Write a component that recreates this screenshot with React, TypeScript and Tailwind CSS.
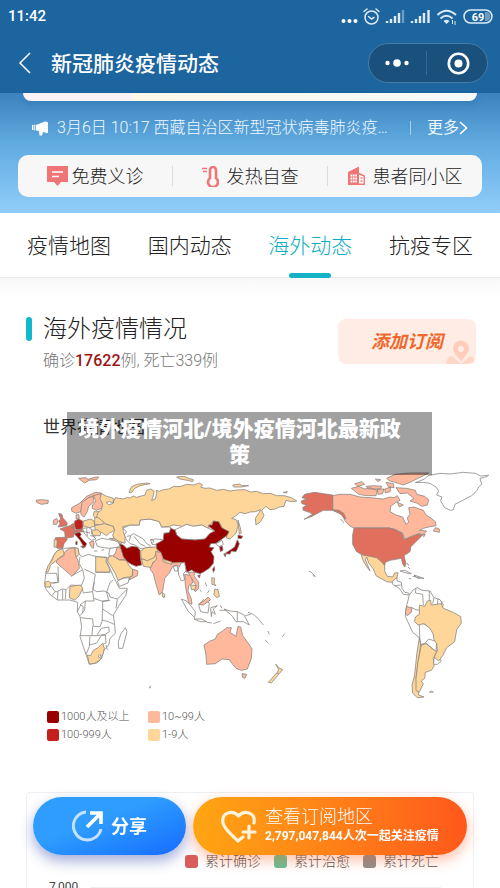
import React from "react";

const DARK = "#990000";
const RED = "#c41f1b";
const CORAL = "#e06f5d";
const PINK = "#ffb89b";
const SAND = "#fed699";
const NONE = "#ffffff";

type Shape = { fill: string; d: string };

const africaEurope: Shape[] = [
  // africa
  {
    fill: NONE,
    d: "M82 257L100 250L135 248L145 252L147 268L158 275L175 268L200 275L232 277L230 290L238 305L248 330L258 350L268 370L292 370L288 390L265 425L250 450L254 480L256 505L240 520L236 540L222 555L215 580L200 594L178 598L172 580L160 545L150 515L155 485L150 455L142 440L143 412L120 405L100 405L82 405L62 390L46 370L44 355L48 320L62 290L72 270Z",
  },
  {
    fill: "none",
    d: "M48 325H80L84 352L56 354M84 304L86 352L68 355M56 366L64 364L75 380L66 392M75 380L84 380L82 404M84 378L98 372L108 374L106 402M98 374V404M108 374L122 360M125 333L158 314L163 340L154 362L122 360M158 314L147 295L150 275M163 312L196 328L192 350L188 380L160 384M196 322L240 322M194 350L188 372L200 380L222 378L236 384M160 384L156 368M188 380L192 408L166 408L150 420M192 400L214 408L236 406L230 382L240 352L250 345M236 384L240 396L262 402L290 374M262 402L258 430M240 406L218 410V432L248 452M166 408L164 436L150 452M218 432L216 470L210 485L190 484L188 462L168 460L152 458M216 465L236 470L252 478M188 484L186 512L150 512M186 512H200L214 490L236 486L238 500L226 508L200 512M180 514L178 545L168 568M178 540L200 534L214 512L226 510L228 534L218 538M142 440L152 420L160 425L158 444M228 540L232 555",
  },
  { fill: SAND, d: "M82 257L98 251L103 268L84 282L62 300L55 320L48 322L54 302L66 286L72 270Z" },
  { fill: PINK, d: "M103 262L118 250L135 249L137 272L146 292L148 310L126 334L78 292L84 282L102 272Z" },
  { fill: SAND, d: "M135 248L144 250L147 268L140 276L136 268Z" },
  { fill: SAND, d: "M197 275L230 278L228 290L236 306L241 321L197 321Z" },
  { fill: SAND, d: "M45 352L56 348L63 356L60 366L46 366Z" },
  { fill: SAND, d: "M120 364L152 360L158 370L148 392L134 405L118 398Z" },
  { fill: SAND, d: "M172 570L182 572L190 556L204 548L218 535L223 550L220 564L210 585L194 595L178 597Z" },
  { fill: NONE, d: "M205 573L210 568L213 574L208 579Z" },
  { fill: NONE, d: "M286 488L291 500L278 550L266 550L265 530L272 508Z" },
  // middle east
  { fill: NONE, d: "M196 228L214 220L238 224L262 228L270 240L264 250L240 250L220 248L202 244Z" },
  { fill: NONE, d: "M240 250L266 246L262 262L248 275L236 270Z" },
  { fill: SAND, d: "M238 220L262 222L276 228L274 236L262 230Z" },
  { fill: PINK, d: "M262 246L272 248L280 270L284 284L268 284L248 274L256 264Z" },
  { fill: SAND, d: "M236 275L248 272L268 285L288 286L296 300L308 314L306 335L282 338L264 346L256 326L244 305L233 288Z" },
  { fill: NONE, d: "M262 348L282 339L298 338L294 354L268 364Z" },
  { fill: PINK, d: "M308 312L324 318L322 332L298 345L300 337L308 332Z" },
  { fill: DARK, d: "M268 236L280 240L290 250L306 244L322 246L330 256L331 278L335 300L318 304L304 298L292 290L280 275Z" },
  { fill: NONE, d: "M282 210L290 200L278 190L300 180L328 180L330 165L360 162L388 170L395 186L422 186L420 203L402 205L400 224L378 222L362 224L366 238L384 240L378 250L360 246L345 250L330 250L315 240L300 236L290 225Z" },
  { fill: "none", d: "M302 212L310 206L326 214L340 222L350 236L362 242M312 214L330 236L346 244M360 222L372 228L366 236M290 214L302 212L298 228" },
  { fill: SAND, d: "M332 258L346 248L376 246L386 252L380 262L372 280L352 288L333 280Z" },
  { fill: SAND, d: "M334 281L352 287L372 278L380 262L386 256L392 264L384 284L368 292L366 308L340 304Z" },
  // europe
  { fill: PINK, d: "M18 106L34 104L55 106L54 115L34 118L20 112Z" },
  { fill: PINK, d: "M146 40L168 38L174 43L194 37L206 36L200 44L178 46L164 54L152 45Z" },
  { fill: PINK, d: "M125 128L150 114L170 94L196 82L214 84L212 94L192 92L176 98L160 112L152 140L138 145L125 138Z" },
  { fill: PINK, d: "M152 142L156 112L176 98L190 95L192 110L176 124L172 140L162 156L154 150Z" },
  { fill: PINK, d: "M190 92L212 86L216 104L219 128L200 136L186 130L188 120L198 108Z" },
  { fill: CORAL, d: "M86 145L96 148L98 158L112 174L110 182L84 186L90 176L86 168L92 162Z" },
  { fill: PINK, d: "M70 166L80 160L84 168L80 178L70 178Z" },
  { fill: CORAL, d: "M90 192L106 186L120 182L134 190L132 205L130 216L106 220L104 200Z" },
  { fill: CORAL, d: "M76 218L104 217L112 223L102 236L98 250L82 250L78 244Z" },
  { fill: SAND, d: "M73 223L82 226L80 247L72 246Z" },
  { fill: RED, d: "M134 168L146 162L158 168L159 186L155 194L138 194L133 182Z" },
  { fill: CORAL, d: "M122 180L133 174L134 190L126 188Z" },
  { fill: PINK, d: "M138 150L146 148L148 160L139 162Z" },
  { fill: SAND, d: "M160 168L182 162L192 168L194 184L178 188L160 182Z" },
  { fill: SAND, d: "M194 154L212 158L222 172L214 180L194 178Z" },
  { fill: SAND, d: "M192 140L206 140L212 156L196 158L190 152Z" },
  { fill: SAND, d: "M194 182L224 176L250 184L254 196L238 204L230 212L214 202L196 196Z" },
  { fill: SAND, d: "M184 196L204 194L212 204L210 212L190 212Z" },
  { fill: NONE, d: "M158 190L176 188L186 194L184 204L190 214L198 222L184 226L174 218L162 204Z" },
  { fill: CORAL, d: "M132 196L156 192L160 200L146 202L134 204Z" },
  { fill: "none", d: "M160 200L180 204M170 190L172 214M180 212L196 214" },
  { fill: PINK, d: "M178 232L190 228L192 236L190 250L184 246Z" },
  { fill: DARK, d: "M132 206L148 202L154 208L150 214L160 226L170 236L168 241L164 248L158 240L150 226L140 214Z" },
  { fill: DARK, d: "M152 244L163 243L160 250ZM138 228L142 230L141 240L137 238Z" },
  { fill: NONE, d: "M192 258L202 258M214 256L222 254" },
];

const asiaPacific: Shape[] = [
  {
    fill: SAND,
    d: "M-85 85L-75 92L-50 100L-50 114L-62 110L-72 112L-64 119L-52 116L-44 98L-20 102L-8 97L0 99L10 93L20 97L30 94L45 90L50 76L62 72L72 78L70 92L65 106L76 102L80 86L78 76L88 79L100 74L116 72L132 64L150 65L170 58L190 60L208 54L218 60L212 66L225 70L240 69L260 76L280 73L300 78L320 75L345 74L362 81L380 79L400 86L420 85L440 92L462 92L484 98L500 108L482 110L468 106L462 124L448 126L435 132L420 134L408 124L395 136L402 152L392 170L378 180L376 160L388 142L392 134L376 140L360 141L345 146L330 142L318 152L305 160L318 164L325 180L318 205L300 222L288 218L297 200L278 192L268 172L250 168L240 180L235 190L215 180L190 184L170 178L158 184L130 180L118 184L95 186L88 170L60 162L30 165L28 180L0 180L-22 185L-20 200L-15 215L-15 235L-35 228L-48 220L-52 210L-46 196L-50 184L-74 176L-86 165L-100 155L-96 142L-86 135L-82 118L-90 100Z",
  },
  { fill: SAND, d: "M-3 82L4 66L20 58L52 54L60 56L30 62L14 70L6 82Z" },
  { fill: SAND, d: "M140 36L162 34L176 40L190 44L188 50L172 46L150 42Z" },
  { fill: SAND, d: "M308 60L330 57L334 62L356 62L334 66L312 66ZM460 82L472 80L470 84Z" },
  { fill: SAND, d: "M324 165L330 185L334 204L328 208L326 188Z" },
  { fill: NONE, d: "M135 194L158 184L170 178L190 184L215 180L235 190L255 198L240 206L225 222L195 225L155 222L140 210Z" },
  {
    fill: DARK,
    d: "M78 237L100 225L102 205L118 203L122 190L135 195L140 210L155 222L195 225L225 222L240 205L255 198L236 184L236 180L246 180L250 168L266 170L275 188L297 200L290 212L272 225L258 235L242 236L238 246L252 248L243 260L252 275L250 295L238 310L222 320L210 326L195 322L185 315L170 322L165 300L150 293L125 294L100 282L92 262L80 252Z",
  },
  { fill: DARK, d: "M203 332L211 329L208 339ZM248 312L253 305L254 315L250 322Z" },
  { fill: NONE, d: "M258 236L276 226L280 238L268 246Z" },
  { fill: DARK, d: "M269 245L277 243L279 256L271 260Z" },
  { fill: DARK, d: "M324 210L338 214L334 221L324 220ZM322 224L328 236L323 250L318 260L304 258L300 267L284 266L302 254L314 246ZM281 267L288 266L286 276Z" },
  { fill: PINK, d: "M76 260L92 262L100 284L124 294L156 292L148 306L142 300L128 304L118 324L104 340L98 378L88 390L78 358L70 326L60 312L68 296L80 282Z" },
  { fill: SAND, d: "M98 283L126 291L124 298L100 290ZM96 382L104 388L103 398L98 396Z" },
  { fill: NONE, d: "M130 304L142 302L144 318L134 318ZM144 312L154 294L164 292L168 318L160 326L164 344L154 348L146 330Z" },
  { fill: PINK, d: "M164 328L184 332L188 354L176 362L174 378L184 402L186 418L176 414L170 384L166 360Z" },
  { fill: PINK, d: "M174 322L196 322L192 332L206 352L206 370L196 380L192 374L198 362L184 338Z" },
  { fill: SAND, d: "M182 360L198 362L196 374L184 374Z" },
  { fill: SAND, d: "M245 338L254 340L252 354L258 362L246 358ZM254 372L264 374L268 394L260 398L252 388ZM238 376L232 384" },
  { fill: NONE, d: "M154 402L170 408L184 424L196 440L194 458L174 438ZM192 462L214 462L230 470L210 470ZM206 420L220 404L238 414L234 444L212 440ZM242 428L262 422L250 432L256 448L246 440L244 455Z" },
  { fill: PINK, d: "M206 418L224 406L234 396L242 404L220 420Z" },
  { fill: NONE, d: "M282 432L300 438L322 440L342 450L358 480L340 470L318 470L304 450Z" },
  { fill: "none", d: "M322 440V470M230 472L246 474M250 476L272 468M270 420L276 430M268 436L290 436M354 442L370 448L384 460L400 480M346 452L362 448M414 498L418 508M406 526L416 535M456 516L464 506M210 374L214 380M226 352L230 364" },
  {
    fill: PINK,
    d: "M222 540L240 528L256 522L262 508L278 498L290 488L304 488L300 502L318 514L324 484L332 486L338 512L356 536L366 552L364 580L352 612L334 616L318 610L308 598L298 584L276 582L256 596L230 598L228 570Z",
  },
  { fill: PINK, d: "M336 626L350 628L345 640L338 637Z" },
  { fill: SAND, d: "M437 597L446 608L458 614L448 626L442 622L446 614ZM440 624L446 628L424 654L415 652Z" },
  { fill: "none", d: "M56 668L62 664L60 670" },
];

const americas: Shape[] = [
  {
    fill: NONE,
    d: "M376 53L404 42L414 32L450 25L480 27L520 22L556 25L572 33L596 31L584 37L570 40L575 58L566 66L560 78L545 92L520 105L495 118L490 134L482 136L464 128L452 108L456 96L440 90L446 78L438 66L420 55L400 52Z",
  },
  { fill: PINK, d: "M290 40L316 28L360 24L416 24L400 32L384 40L360 52L340 60L322 54L300 48Z" },
  {
    fill: PINK,
    d: "M128 92L150 88L180 88L210 96L240 98L280 102L300 96L312 98L322 92L330 106L318 112L302 124L300 140L318 150L338 156L348 178L356 172L352 158L360 148L356 128L372 126L400 136L408 150L424 160L436 170L438 182L416 186L400 190L388 196L410 198L398 210L388 206L368 212L345 224L338 204L314 193L298 189L192 189L178 182L164 166L158 150L128 136Z",
  },
  { fill: PINK, d: "M184 70L206 64L224 72L240 68L262 76L258 92L230 92L206 88ZM194 56L216 50L224 58L204 64ZM228 64L250 62L276 64L270 72L236 72ZM262 72L282 72L278 86L264 88ZM284 72L302 66L300 80L286 84ZM256 42L272 44L264 50ZM288 52L310 56L312 68L296 66Z" },
  { fill: PINK, d: "M318 68L350 70L376 76L380 88L404 94L416 104L412 120L396 124L380 114L360 108L372 100L352 84L330 86ZM322 112L340 120L328 126Z" },
  { fill: PINK, d: "M436 188L448 192L448 202L430 198ZM394 208L406 208L402 215Z" },
  {
    fill: CORAL,
    d: "M128 90L100 86L74 82L44 88L36 98L50 102L34 108L36 116L50 120L38 128L40 136L58 142L68 148L42 163L66 154L88 142L100 136L128 136L150 144L162 160L168 162L162 146L148 136L128 134Z",
  },
  {
    fill: CORAL,
    d: "M192 189L298 189L316 194L336 205L342 224L368 214L388 207L396 212L376 232L362 246L360 260L342 272L348 296L344 306L338 296L334 280L300 286L286 292L284 302L274 292L260 278L234 276L214 268L200 260L188 238L188 210Z",
  },
  { fill: SAND, d: "M214 269L260 278L276 292L284 302L284 318L292 334L308 336L314 324L324 323L320 342L308 352L290 350L258 332L250 312L236 294L230 276L226 284L240 318L228 302L218 284Z" },
  { fill: NONE, d: "M306 350L320 338L322 348L334 352L336 370L344 382L356 384L358 390L340 388L328 370L308 358Z" },
  { fill: "none", d: "M314 362L332 360M330 318L344 316L364 326L356 326ZM368 334L390 338M372 330L402 340L382 340ZM356 340L364 342M352 294L356 302M354 306L360 312M56 318L64 322L76 334L68 332M152 162L162 174" },
  { fill: NONE, d: "M358 390L370 374L382 368L396 376L420 378L432 398L450 404L460 420L450 440L400 440L390 470L424 490L440 530L438 560L410 536L392 538L388 518L368 502L346 454L348 430Z" },
  { fill: NONE, d: "M444 575L454 588L442 598L430 598L432 580Z" },
  { fill: "none", d: "M378 370L376 384L398 388L400 420M418 378V420M432 398L428 416M444 400L442 420M456 408L454 420M362 426L378 434L390 436M388 480L390 540L404 536L416 522L434 528" },
  { fill: PINK, d: "M350 424L366 430L364 442L352 452L346 444Z" },
  {
    fill: SAND,
    d: "M388 420L404 424L412 408L422 406L424 420L454 416L460 430L490 442L512 455L514 474L500 494L494 530L470 548L458 572L446 588L432 576L442 558L440 536L432 524L430 508L420 490L402 476L384 480L374 470L376 456L388 448Z",
  },
  { fill: SAND, d: "M388 518L392 538L382 610L378 640L386 690L402 696L382 698L368 684L366 660L374 630L380 570Z" },
  { fill: SAND, d: "M394 540L408 536L430 554L440 560L430 580L432 604L424 616L406 622L404 640L394 648L400 656L388 682L378 676L378 640L384 590Z" },
  { fill: "none", d: "M418 682L424 678L430 681Z" },
];

const legend = [
  { color: "bg-[#990000]", label: "1000人及以上" },
  { color: "bg-[#ffb89b]", label: "10~99人" },
  { color: "bg-[#c41f1b]", label: "100-999人" },
  { color: "bg-[#fed699]", label: "1-9人" },
];

const series = [
  { color: "bg-[#db5c5c]", label: "累计确诊" },
  { color: "bg-[#66c096]", label: "累计治愈" },
  { color: "bg-[#8e8e8e]", label: "累计死亡" },
];

const tabs = ["疫情地图", "国内动态", "海外动态", "抗疫专区"];

const Shapes = ({ items, x }: { items: Shape[]; x: number }) => (
  <g transform={`translate(${x} 0)`}>
    {items.map((s, i) => (
      <path key={i} d={s.d} fill={s.fill} />
    ))}
  </g>
);

const WorldMap = () => (
  <svg
    viewBox="0 0 1500 705"
    className="block w-full"
    stroke="#8c8783"
    strokeWidth="2.4"
    strokeLinejoin="round"
    role="img"
    aria-label="世界疫情地图"
  >
    <Shapes items={africaEurope} x={90} />
    <Shapes items={asiaPacific} x={390} />
    <Shapes items={americas} x={870} />
  </svg>
);

const StatusIcons = () => (
  <svg width="154" height="20" viewBox="0 0 154 20" fill="none" stroke="#dcebf6">
    <g fill="#fff" stroke="none">
      <circle cx="4.5" cy="14" r="2" />
      <circle cx="10.5" cy="14" r="2" />
      <circle cx="16.5" cy="14" r="2" />
    </g>
    <g strokeWidth="1.5" strokeLinecap="round">
      <circle cx="32.5" cy="10.5" r="6.5" />
      <path d="M29.5 9.5L32.5 12L35 10.5M25 4.5L28 2M40 4.5L37 2" />
    </g>
    <g strokeWidth="2.4">
      <path d="M48 16v-2M52 16v-4M56 16v-7M60 16V6" />
      <path d="M64 16V3" stroke="#6b9cc4" />
      <path d="M73 16v-2M77 16v-4M81 16v-7M85 16V6M89.5 16V3" />
    </g>
    <g strokeWidth="2">
      <path d="M98.5 8Q107.5 -0.5 117 8M101.5 11.5Q107.5 6 113.5 11.5" />
      <path d="M104.5 14Q107.5 11.5 110.5 14L107.5 17Z" fill="#dcebf6" stroke="none" />
      <path d="M113.5 13v4M116 14v4" strokeWidth="1" />
    </g>
    <rect x="125" y="3" width="28" height="13" rx="6.5" strokeWidth="1.5" />
    <path d="M146 5h1a4.5 4.5 0 0 1 0 9h-1z" fill="#6b9cc4" stroke="none" />
    <text
      x="139"
      y="13.5"
      textAnchor="middle"
      fontSize="11"
      fontWeight="700"
      fill="#fff"
      stroke="none"
    >
      69
    </text>
  </svg>
);

const Header = () => (
  <header className="bg-[#1d659f] text-white">
    <div className="flex h-[33px] items-center justify-between pl-2 pr-[7px]">
      <span className="text-[15px] font-medium">11:42</span>
      <StatusIcons />
    </div>
    <div className="flex h-[60px] items-center justify-between pl-[18px] pr-3">
      <div className="flex items-center gap-[19px]">
        <button type="button" aria-label="返回">
          <svg width="14" height="22" viewBox="0 0 14 22" fill="none" stroke="#fff" strokeWidth="1.5">
            <path d="M12 1L2 11L12 21" />
          </svg>
        </button>
        <h1 className="pt-1 text-[21px] font-medium">新冠肺炎疫情动态</h1>
      </div>
      <div className="flex h-10 w-[120px] items-center rounded-full border border-[#467ca8] bg-[#1a507c]">
        <button type="button" aria-label="更多操作" className="flex h-6 flex-1 items-center justify-center border-r border-[#3a6a92]">
          <svg width="24" height="8" viewBox="0 0 24 8" fill="#fff">
            <circle cx="2.5" cy="4" r="2.2" />
            <circle cx="12" cy="4" r="3.8" />
            <circle cx="21.5" cy="4" r="2.2" />
          </svg>
        </button>
        <button type="button" aria-label="关闭" className="flex flex-1 items-center justify-center pl-1">
          <svg width="23" height="23" viewBox="0 0 23 23">
            <circle cx="11.5" cy="11.5" r="9.7" fill="none" stroke="#fff" strokeWidth="2.6" />
            <circle cx="11.5" cy="11.5" r="4" fill="#fff" />
          </svg>
        </button>
      </div>
    </div>
  </header>
);

const Services = () => (
  <div className="mx-[18px] flex h-[42px] items-center rounded-[10px] bg-[#f7f7f7] text-[18px] font-light text-[#222]">
    <a href="#clinic" className="flex h-5 flex-1 items-center justify-center gap-1">
      <svg width="21" height="20" viewBox="0 0 21 20" fill="#ef7577">
        <path d="M0 0H21V16H14L10.500 20L7 16H0z" />
        <path d="M5 6h11M5 10.500h7" stroke="#fff" strokeWidth="1.500" />
      </svg>
      免费义诊
    </a>
    <a href="#fever" className="flex h-5 flex-1 items-center justify-center gap-2 border-x border-[#dcdcdc]">
      <svg width="17" height="21" viewBox="0 0 17 21" fill="none" stroke="#ef7577">
        <path d="M8 12V4a3 3 0 0 1 6 0v8a5 5 0 1 1-6 0z" strokeWidth="2.6" />
        <path d="M0 2.5h5M1 5.5h4" strokeWidth="1.3" />
      </svg>
      发热自查
    </a>
    <a href="#nearby" className="flex h-5 flex-1 items-center justify-center gap-2">
      <svg width="17" height="20" viewBox="0 0 17 20" fill="#ef7577">
        <path d="M0 6L11 .5V19H0z" />
        <path d="M11 7.5l5.2 2.5V18.3H11" fill="#fff" stroke="#ef7577" strokeWidth="1.4" />
        <path d="M2.5 9.5h6.5M2.5 12.500h6.500M2.500 15.500h6.500" stroke="#fff" strokeWidth="1.8" strokeDasharray="1.8 .6" />
        <path d="M12.5 12h2M12.5 15h2" stroke="#ef7577" strokeWidth="1.3" />
      </svg>
      患者同小区
    </a>
  </div>
);

const Banner = () => (
  <section className="h-[120px] bg-linear-to-b from-[#3b83be] via-[#62ade2] via-45% to-[#91cdfa]">
    <div className="mx-[23px] h-2 rounded-b-2xl bg-linear-to-r from-[#fbf3f6] from-24% via-[#fdf9ea] via-24% to-[#f6fafa] shadow-md shadow-[#2f76b0]/40" />
    <div className="flex h-[54px] items-center px-8 text-[16px] text-[#f0f8ff]">
      <svg width="17" height="16" viewBox="0 0 17 16" fill="#fff" className="mr-2 shrink-0">
        <path d="M4 5L13 1.5Q16 1 16 3V12Q16 14 13 12.5L11 12L10 15.5H7.5L7 11L4 10.5z" />
        <path d="M0 5h1.5v5H0zM2.3 4.5h1v6h-1z" />
      </svg>
      <a href="#news" className="min-w-0 flex-1 truncate font-light">
        3月6日 10:17 西藏自治区新型冠状病毒肺炎疫情通报
      </a>
      <span className="ml-4 h-3.5 w-px bg-[#a6cdec]" />
      <a href="#more" className="ml-4 flex items-center">
        更多
        <svg width="9" height="14" viewBox="0 0 9 14" fill="none" stroke="#fff" strokeWidth="1.6">
          <path d="M1 1L7.5 7L1 13" />
        </svg>
      </a>
    </div>
    <Services />
  </section>
);

const Tabs = () => (
  <nav className="flex h-[65px] justify-between border-b border-[#e8e8e8] bg-white px-[27px] text-[21px] font-light text-[#222]">
    {tabs.map((tab) => (
      <button
        key={tab}
        type="button"
        className={
          tab === "海外动态"
            ? "relative pt-1 text-[#0fadc2] after:absolute after:-bottom-px after:left-1/4 after:h-[5px] after:w-1/2 after:rounded-sm after:bg-[#16b2c6]"
            : "relative pt-1"
        }
      >
        {tab}
      </button>
    ))}
  </nav>
);

const Overview = () => (
  <section className="flex items-start justify-between bg-linear-to-b from-[#f8f8f8] to-white to-20% pl-[26px] pr-6 pt-[35px]">
    <div>
      <h2 className="flex h-8 items-center gap-[11px] text-[24px] font-light text-[#222]">
        <span className="h-6 w-1.5 rounded-full bg-[#12b7cb]" />
        海外疫情情况
      </h2>
      <p className="pl-[17px] text-[16px] font-light leading-8 text-[#777]">
        确诊<span className="font-medium text-[#9c1414]">17622</span>例, 死亡339例
      </p>
    </div>
    <button
      type="button"
      className="relative mt-1.5 h-[45px] w-[138px] overflow-hidden rounded-[8px] bg-[#ffede5] text-[18px] font-bold italic text-[#f0682c]"
    >
      添加订阅
      <svg width="30" height="24" viewBox="0 0 30 24" className="absolute bottom-0 right-0" fill="#ffcdb9">
        <path d="M0 24Q1 16 6 16L15 24L24 16Q29 16 29 22L28 24z" opacity=".7" />
        <path d="M15 21Q7 13 7 8.5a8 8 0 0 1 16 0Q23 13 15 21z" />
        <circle cx="15" cy="9" r="3" fill="#ffede5" />
      </svg>
    </button>
  </section>
);

const MapSection = () => (
  <section className="relative pt-[35px]">
    <h3 className="pl-[43px] text-[17px] leading-[30px] text-[#333]">世界疫情地图</h3>
    <div className="pt-[23px]">
      <WorldMap />
    </div>
    <p className="absolute left-[67px] right-[68px] top-[35px] h-[63px] bg-black/37 pl-2 pr-7 pt-1 text-center text-[21px] font-black leading-[26px] text-white">
      境外疫情河北/境外疫情河北最新政策
    </p>
    <ul className="ml-[47px] grid w-[210px] grid-cols-[101px_1fr] pt-2 text-[11px] font-light leading-[18px] text-[#555]">
      {legend.map((item) => (
        <li key={item.label} className="flex items-center gap-[2px]">
          <span className={`h-3 w-3 rounded-[2px] ${item.color}`} />
          {item.label}
        </li>
      ))}
    </ul>
  </section>
);

const ChartCard = () => (
  <section className="mx-[26px] mt-12 h-[300px] rounded border border-[#efefef] pt-[58px]">
    <ul className="flex justify-end gap-[13px] pr-[34px] text-[14px] font-light leading-5 text-[#555]">
      {series.map((item) => (
        <li key={item.label} className="flex items-center gap-[7px]">
          <span className={`h-[13px] w-[13px] rounded-[3px] ${item.color}`} />
          {item.label}
        </li>
      ))}
    </ul>
    <div className="flex items-center gap-3 pl-[22px] pr-8 pt-2 text-[12px] leading-4 text-[#444]">
      7,000
      <span className="h-px flex-1 bg-[#eee]" />
    </div>
  </section>
);

const ActionBar = () => (
  <div className="fixed inset-x-0 bottom-[33px] flex h-[58px] gap-[7px] px-[33px] text-white">
    <button
      type="button"
      className="flex w-[153px] items-center justify-center gap-2 rounded-full bg-linear-to-br from-[#2f9dff] from-40% to-[#1a6bff] text-[18px] font-bold shadow-[0_6px_14px_rgba(50,70,170,0.45)]"
    >
      <svg width="31" height="32" viewBox="0 0 31 32" fill="none" stroke="#fff">
        <path d="M14 2A14 14 0 1 0 29 19" stroke="#c4e2ff" strokeWidth="3" />
        <path d="M15 17L28 4M18 3H29V14" strokeWidth="3.6" />
      </svg>
      分享
    </button>
    <button
      type="button"
      className="flex flex-1 items-center gap-2 rounded-full bg-linear-to-r from-[#ffa512] to-[#ff571b] pl-7 shadow-[0_5px_14px_rgba(255,90,30,0.4)]"
    >
      <svg width="36" height="33" viewBox="0 0 36 33" fill="none" stroke="#fff3dc" strokeWidth="3.2" strokeLinecap="round" strokeLinejoin="round">
        <path d="M33 13C35 3 24-1 17.5 6C11-1 0 3 2 13C3 19 12 26 17 31L22 27" />
        <path d="M28 16V28M22 22H34" />
      </svg>
      <span className="flex flex-col text-left">
        <span className="text-[18px] font-light leading-5">查看订阅地区</span>
        <span className="text-[12px] font-bold leading-[18px]">2,797,047,844人次一起关注疫情</span>
      </span>
    </button>
  </div>
);

const App = () => {
  return (
    <main className="h-screen overflow-hidden bg-white font-['Roboto','Noto_Sans_CJK_SC',sans-serif]">
      <Header />
      <Banner />
      <Tabs />
      <Overview />
      <MapSection />
      <ChartCard />
      <ActionBar />
    </main>
  );
};

export default App;
